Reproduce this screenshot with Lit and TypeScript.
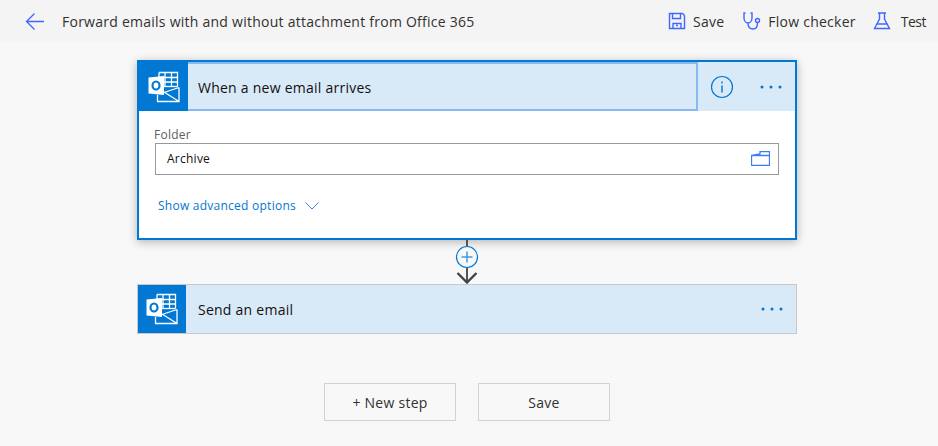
import { LitElement, html, css, svg } from 'lit';
import { customElement } from 'lit/decorators.js';

const outlook = () => html`
  <svg class="logo" width="32" height="32" viewBox="0 0 32 32" fill="none" stroke="#fff">
    <path d="M11 1.500h18.500v14M11 1.500v5M17 1.500v14M23.500 1.500v14M11 6.500h18.500M16 11h13.500" stroke-width="1.300"/>
    <path d="M16 15.500h13.500" stroke-width="1.300"/>
    <path d="M9.500 20v11h21.500V16.500z" fill="#0078d4" stroke="none"/>
    <path d="M9.500 24v6.500h21.500V16.500M16 21l15 9.500M16 21.500l15-5" stroke-width="1.300"/>
    <path d="M.5 6.500L16 5v19l-15.500-1.500z" fill="#fff" stroke="none"/>
    <ellipse cx="8" cy="14.500" rx="3.500" ry="4" stroke="#0078d4" stroke-width="2.200"/>
  </svg>`;

const dots = html`
  <svg class="dots" width="22" height="4" viewBox="0 0 22 4">
    <circle cx="2" cy="2" r="1.500" fill="#0078d4"/>
    <circle cx="11" cy="2" r="1.500" fill="#0078d4"/>
    <circle cx="20" cy="2" r="1.500" fill="#0078d4"/>
  </svg>`;

const headerIcon = (body: unknown) => html`
  <svg width="18" height="18" viewBox="0 0 18 18" fill="none" stroke="#3f66ff" stroke-width="1.400">${body}</svg>`;

@customElement('app-root')
export class AppRoot extends LitElement {
  static styles = css`
    :host {
      display: block;
      height: 446px;
      overflow: hidden;
      background: #f8f8f8;
      font-family: 'Open Sans', 'Noto Sans', sans-serif;
      color: #323130;
      letter-spacing: 0.25px;
    }
    .topbar {
      height: 42px;
      background: #f4f4f4;
      display: flex;
      align-items: center;
      padding: 0 12px 0 25px;
      font-size: 14px;
    }
    .back {
      display: block;
      margin-right: 18px;
    }
    .title {
      flex: 1;
    }
    .cmd {
      display: flex;
      align-items: center;
      gap: 7px;
      margin-left: 17px;
    }
    .cmd.save {
      margin-right: 2px;
    }
    .cmd.test {
      gap: 10px;
      letter-spacing: -0.5px;
    }
    .canvas {
      width: 660px;
      margin: 18px 0 0 137px;
    }
    .card {
      background: #fff;
      box-sizing: border-box;
    }
    .card.open {
      height: 180px;
      border: 2px solid #0078d4;
      box-shadow: 0 2px 9px rgba(0, 0, 0, 0.28);
    }
    .card.closed {
      height: 50px;
      border: 1px solid #c8c8c8;
    }
    .head {
      display: flex;
      align-items: center;
      background: #d8e9f8;
      font-size: 14px;
      color: #111;
    }
    .open .head {
      height: 49px;
    }
    .closed .head {
      height: 48px;
    }
    .tile {
      width: 49px;
      height: 100%;
      flex: none;
      display: flex;
      align-items: center;
      justify-content: center;
      background: #0078d4;
    }
    .closed .tile {
      width: 48px;
    }
    .name {
      flex: 1;
      height: 100%;
      display: flex;
      align-items: center;
      box-sizing: border-box;
      padding: 2px 0 0 10px;
    }
    .open .name {
      border: 2px solid #8ab9f1;
      border-left: 0;
    }
    .closed .name {
      padding: 0 0 0 12px;
    }
    .info {
      width: 47px;
      display: flex;
      justify-content: center;
    }
    .dots {
      flex: none;
      margin: 0 13px 0 15px;
    }
    .body {
      padding: 16px 16px 0 16px;
    }
    .label {
      font-size: 12px;
      line-height: 16px;
      color: #605e5c;
      margin-left: -1px;
    }
    .field {
      height: 32px;
      box-sizing: border-box;
      border: 1px solid #999;
      display: flex;
      align-items: center;
      justify-content: space-between;
      padding: 0 8px 2px 11px;
      font-size: 12px;
      color: #111;
    }
    .advanced {
      display: flex;
      align-items: center;
      gap: 9px;
      margin: 23px 0 0 3px;
      font-size: 12px;
      line-height: 16px;
      color: #0078d4;
    }
    .link {
      height: 44px;
      position: relative;
    }
    .link svg {
      position: absolute;
      left: 318px;
      top: 0;
    }
    .actions {
      display: flex;
      justify-content: center;
      gap: 22px;
      margin-top: 49px;
    }
    .btn {
      width: 132px;
      height: 38px;
      box-sizing: border-box;
      border: 1px solid #d2d2d2;
      display: flex;
      align-items: center;
      justify-content: center;
      font-size: 14px;
    }
  `;

  render() {
    return html`
      <div class="topbar">
        <svg class="back" width="19" height="18" viewBox="0 0 19 18" fill="none" stroke="#3f66ff" stroke-width="1.300">
          <path d="M19 9.500H1.500M9.500 1.500L1.500 9.500l8 8"/>
        </svg>
        <div class="title">Forward emails with and without attachment from Office 365</div>
        <div class="cmd save">
          ${headerIcon(svg`<path d="M1.500 1.500h13l2 2v13h-15zM4.500 1.500v5h8v-5M5 16.500v-5h8v5M8 13.500h2"/>`)}
          Save
        </div>
        <div class="cmd">
          ${headerIcon(svg`<path d="M2.500 1H1v5c0 3 2 5 4 5s4-2 4-5V1H7.500M5 11c0 4 2 6 5 6s4.500-2 4.500-6"/><circle cx="14.500" cy="8.500" r="2"/>`)}
          Flow checker
        </div>
        <div class="cmd test">
          ${headerIcon(svg`<path d="M5 1h8M6.500 1v6L1.500 16.500h15L11.500 7V1M4 12h10"/>`)}
          Test
        </div>
      </div>

      <div class="canvas">
        <div class="card open">
          <div class="head">
            <div class="tile">${outlook()}</div>
            <div class="name">When a new email arrives</div>
            <div class="info">
              <svg width="24" height="24" viewBox="0 0 24 24" fill="none" stroke="#0078d4">
                <circle cx="12" cy="12" r="10.500" stroke-width="1.200"/>
                <path d="M12 10.500v7M12 6.500v2" stroke-width="1.400"/>
              </svg>
            </div>
            ${dots}
          </div>
          <div class="body">
            <div class="label">Folder</div>
            <div class="field">
              Archive
              <svg width="19" height="15" viewBox="0 0 19 15" fill="none" stroke="#3f7df5" stroke-width="1.300">
                <path d="M.5 4.500h18v10H.5zM.5 4.500L9 3V.5h9.500v4"/>
              </svg>
            </div>
            <div class="advanced">
              Show advanced options
              <svg width="14" height="8" viewBox="0 0 14 8" fill="none" stroke="#3f7df5">
                <path d="M.5 .5L7 7l6.500-6.500"/>
              </svg>
            </div>
          </div>
        </div>

        <div class="link">
          <svg width="24" height="44" viewBox="0 0 24 44" fill="none">
            <path d="M12 0v42" stroke="#555" stroke-width="2"/>
            <path d="M2.500 33l9.500 9.500 9.500-9.500" stroke="#444" stroke-width="2.400"/>
            <circle cx="12" cy="17" r="10.500" fill="#f8f8f8" stroke="#0078d4" stroke-width="1.200"/>
            <path d="M12 11.500v11M6.500 17h11" stroke="#3f9be6" stroke-width="1.500"/>
          </svg>
        </div>

        <div class="card closed">
          <div class="head">
            <div class="tile">${outlook()}</div>
            <div class="name">Send an email</div>
            ${dots}
          </div>
        </div>

        <div class="actions">
          <div class="btn">+ New step</div>
          <div class="btn">Save</div>
        </div>
      </div>
    `;
  }
}
